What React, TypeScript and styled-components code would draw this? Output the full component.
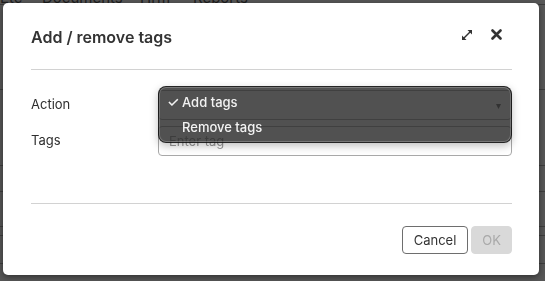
import React from "react";
import styled, { createGlobalStyle } from "styled-components";

const Global = createGlobalStyle`
  html, body { margin: 0; padding: 0; }
  body {
    width: 545px; height: 281px; overflow: hidden;
    background: #575757;
    font-family: Inter, "Noto Sans", sans-serif;
  }
`;

const BackPage = styled.div`
  width: 545px;
  height: 281px;
  overflow: hidden;
  display: flex;
  flex-direction: column;
`;

const NavBar = styled.div`
  display: flex;
  align-items: center;
  height: 14px;
  margin-top: -10px;
  font-size: 15px;
  color: #1e1e1e;
  border-bottom: 1px solid #3c3c3c;
`;

const NavItem = styled.span<{ $w: number }>`
  width: ${(p) => p.$w}px;
  flex: none;
  overflow: hidden;
  white-space: nowrap;
`;

const BackRow = styled.div<{ $h: number }>`
  height: ${(p) => p.$h}px;
  border-bottom: 1px solid #3e3e3e;
  flex: none;
`;

const Overlay = styled.div`
  position: fixed;
  inset: 0;
  padding: 3px 6px 6px 3px;
  display: flex;
`;

const Modal = styled.div`
  width: 536px;
  height: 272px;
  background: #fff;
  border-radius: 5px;
  box-shadow: 0 2px 6px rgba(0, 0, 0, 0.45);
  padding: 0 27px 0 28px;
  box-sizing: border-box;
  display: flex;
  flex-direction: column;
  color: #333;
`;

const Header = styled.div`
  height: 66px;
  display: flex;
  align-items: center;
  border-bottom: 1px solid #d2d2d2;
  padding-right: 9px;
`;

const Title = styled.h2`
  margin: 0;
  padding-top: 2px;
  font-size: 16px;
  font-weight: 600;
  color: #333;
  flex: 1;
`;

const IconButton = styled.button`
  border: none;
  background: none;
  padding: 0;
  width: 14px;
  height: 14px;
  display: flex;
  align-items: center;
  justify-content: center;
  color: #333;
  cursor: pointer;
  margin-left: 15px;
  margin-top: -3px;
`;

const Body = styled.div`
  padding-top: 20px;
  height: 113px;
  display: flex;
  flex-direction: column;
  gap: 6px;
  border-bottom: 1px solid #d2d2d2;
`;

const FormRow = styled.div`
  display: flex;
  align-items: center;
  height: 30px;
`;

const Label = styled.label`
  width: 127px;
  font-size: 13px;
  color: #2e2e2e;
  flex: none;
  margin-top: -3px;
`;

const Field = styled.div`
  position: relative;
  flex: 1;
  height: 30px;
`;

const Control = styled.div`
  height: 30px;
  border: 1px solid #a8a8a8;
  border-radius: 4px;
  box-sizing: border-box;
  padding: 0 10px;
  display: flex;
  align-items: center;
  font-size: 13px;
  color: #999;
`;

const Chevron = styled.span`
  margin-left: auto;
  font-size: 10px;
  color: #666;
`;

const Menu = styled.div`
  position: absolute;
  left: 0;
  right: 0;
  top: -4px;
  height: 57px;
  box-sizing: border-box;
  border-radius: 8px;
  background: rgba(38, 38, 38, 0.8);
  border: 1px solid rgba(0, 0, 0, 0.55);
  box-shadow: inset 0 0 0 1px rgba(255, 255, 255, 0.22), 0 3px 8px rgba(0, 0, 0, 0.25);
  padding-top: 2px;
  z-index: 2;
`;

const MenuItem = styled.div`
  height: 25px;
  display: flex;
  align-items: center;
  padding-left: 8px;
  font-size: 13px;
  font-weight: 500;
  color: #f2f2f2;
`;

const Check = styled.span`
  width: 15px;
  flex: none;
  font-size: 14px;
`;

const Footer = styled.div`
  flex: 1;
  display: flex;
  justify-content: flex-end;
  align-items: flex-start;
  padding-top: 22px;
  gap: 3px;
`;

const Button = styled.button<{ $disabled?: boolean }>`
  height: 28px;
  padding: 0 ${(p) => (p.$disabled ? 10 : 11)}px;
  font-family: Inter, "Noto Sans", sans-serif;
  font-size: 13px;
  border-radius: 4px;
  box-sizing: border-box;
  border: 1px solid ${(p) => (p.$disabled ? "#d9d9d9" : "#6e6e6e")};
  background: ${(p) => (p.$disabled ? "#d9d9d9" : "#fff")};
  color: ${(p) => (p.$disabled ? "#a9a9a9" : "#333")};
`;

const ExpandIcon = () => (
  <svg width="12" height="12" viewBox="0 0 12 12" fill="currentColor">
    <line x1="2.5" y1="9.5" x2="9.5" y2="2.5" stroke="currentColor" strokeWidth="1.4" />
    <polygon points="6.5,1 11,1 11,5.5" />
    <polygon points="1,6.5 1,11 5.5,11" />
  </svg>
);

const CloseIcon = () => (
  <svg width="11" height="11" viewBox="0 0 11 11">
    <path d="M1.5 1.5 L9.5 9.5 M9.5 1.5 L1.5 9.5" stroke="currentColor" strokeWidth="2.6" strokeLinecap="round" />
  </svg>
);

export default function App() {
  return (
    <>
      <Global />
      <BackPage>
        <NavBar>
          <NavItem $w={42}>Etc</NavItem>
          <NavItem $w={98}>Documents</NavItem>
          <NavItem $w={53}>Hrm</NavItem>
          <NavItem $w={80}>Reports</NavItem>
        </NavBar>
        <BackRow $h={84} />
        <BackRow $h={75} />
        <BackRow $h={25} />
        <BackRow $h={34} />
        <BackRow $h={8} />
        <BackRow $h={27} />
      </BackPage>
      <Overlay>
        <Modal>
          <Header>
            <Title>Add / remove tags</Title>
            <IconButton aria-label="Expand">
              <ExpandIcon />
            </IconButton>
            <IconButton aria-label="Close">
              <CloseIcon />
            </IconButton>
          </Header>
          <Body>
            <FormRow>
              <Label>Action</Label>
              <Field>
                <Control>
                  <Chevron>▾</Chevron>
                </Control>
                <Menu>
                  <MenuItem>
                    <Check>✓</Check>Add tags
                  </MenuItem>
                  <MenuItem>
                    <Check />Remove tags
                  </MenuItem>
                </Menu>
              </Field>
            </FormRow>
            <FormRow>
              <Label>Tags</Label>
              <Field>
                <Control>Enter tag</Control>
              </Field>
            </FormRow>
          </Body>
          <Footer>
            <Button>Cancel</Button>
            <Button $disabled>OK</Button>
          </Footer>
        </Modal>
      </Overlay>
    </>
  );
}
